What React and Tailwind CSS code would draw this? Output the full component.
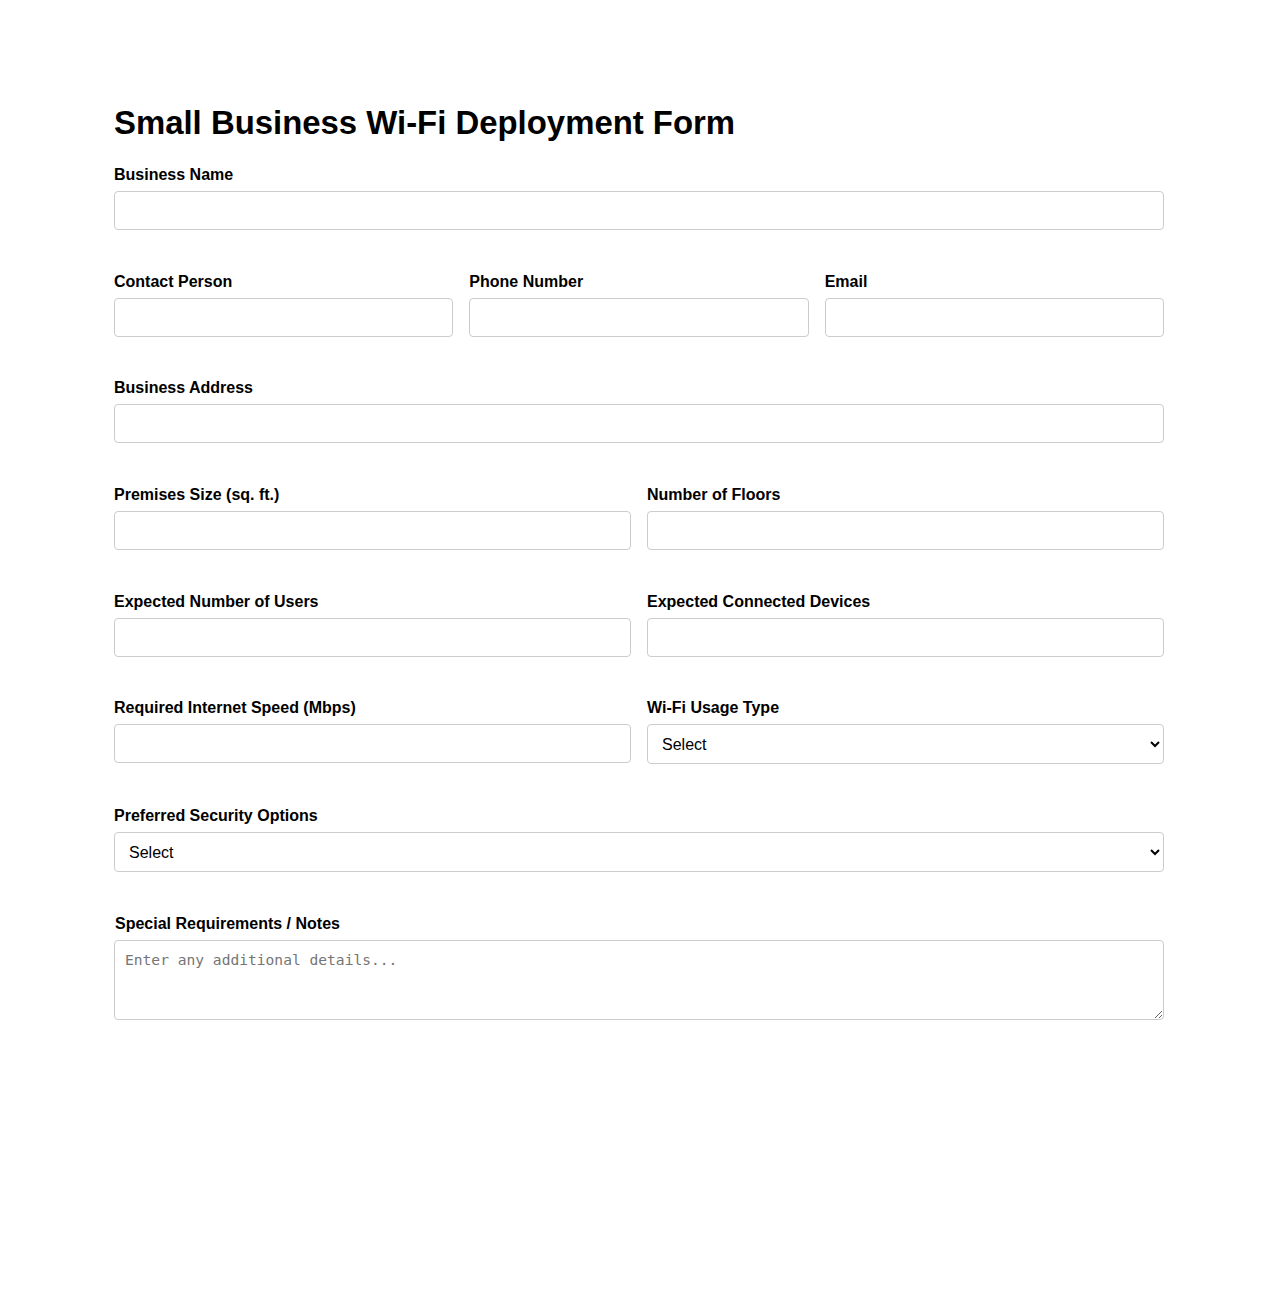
import React from 'react';

/* Shared field styles */
const inputCls =
  'block w-full h-[39px] px-[10px] border border-[#cccccc] rounded-[4px] bg-white text-[16px] text-black outline-none';
const selectCls =
  'block w-full h-[40px] px-[10px] border border-[#cccccc] rounded-[4px] bg-white text-[16px] text-black outline-none';

function Field({ label, children, labelClass = '' }) {
  return (
    <div className="flex flex-col">
      <label className={`block pt-[2px] text-[16px] leading-[18px] font-bold text-black mb-[7px] ${labelClass}`}>
        {label}
      </label>
      {children}
    </div>
  );
}

export default function App() {
  return (
    <div
      className="min-h-[1300px] bg-white text-black"
      style={{ fontFamily: '"Liberation Sans", Arial, sans-serif' }}
    >
      <div className="mx-auto w-[1050px] pt-[104px]">
        <h1 className="text-[32.9px] leading-[37px] font-bold mb-[23px]">
          Small Business Wi-Fi Deployment Form
        </h1>

        <form className="flex flex-col gap-[40.7px]" onSubmit={(e) => e.preventDefault()}>
          <Field label="Business Name">
            <input type="text" className={inputCls} />
          </Field>

          <div className="grid grid-cols-3 gap-4">
            <Field label="Contact Person">
              <input type="text" className={inputCls} />
            </Field>
            <Field label="Phone Number">
              <input type="tel" className={inputCls} />
            </Field>
            <Field label="Email">
              <input type="email" className={inputCls} />
            </Field>
          </div>

          <Field label="Business Address">
            <input type="text" className={inputCls} />
          </Field>

          <div className="grid grid-cols-2 gap-4">
            <Field label="Premises Size (sq. ft.)">
              <input type="number" className={inputCls} />
            </Field>
            <Field label="Number of Floors">
              <input type="number" className={inputCls} />
            </Field>
          </div>

          <div className="grid grid-cols-2 gap-4">
            <Field label="Expected Number of Users">
              <input type="number" className={inputCls} />
            </Field>
            <Field label="Expected Connected Devices">
              <input type="number" className={inputCls} />
            </Field>
          </div>

          <div className="grid grid-cols-2 gap-4 items-start">
            <Field label="Required Internet Speed (Mbps)">
              <input type="number" className={inputCls} />
            </Field>
            <Field label="Wi-Fi Usage Type">
              <select className={selectCls} defaultValue="">
                <option value="">Select</option>
                <option>Office / Productivity</option>
                <option>Retail / Guest Access</option>
                <option>Hospitality</option>
                <option>Mixed Use</option>
              </select>
            </Field>
          </div>

          <Field label="Preferred Security Options">
            <select className={selectCls} defaultValue="">
              <option value="">Select</option>
              <option>WPA2-Personal</option>
              <option>WPA3-Personal</option>
              <option>WPA2/WPA3-Enterprise</option>
              <option>Guest Network Isolation</option>
            </select>
          </Field>

          <Field label="Special Requirements / Notes" labelClass="ml-px">
            <textarea
              rows={3}
              placeholder="Enter any additional details..."
              className="block w-full h-[80px] px-[10px] pt-[8px] pb-[10px] border border-[#cccccc] rounded-[4px] bg-white text-[14.6px] text-black placeholder:text-[#757575] outline-none resize-y"
              style={{ fontFamily: '"DejaVu Sans Mono", monospace' }}
            />
          </Field>
        </form>
      </div>
    </div>
  );
}
